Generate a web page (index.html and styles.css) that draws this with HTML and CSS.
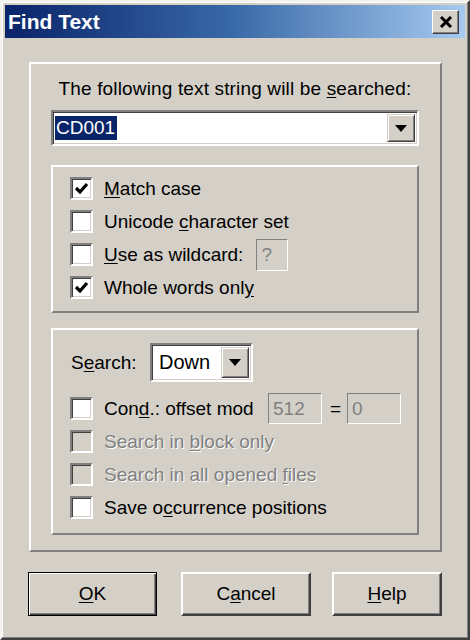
FILE: index.html
```html
<!DOCTYPE html>
<html lang="en">
<head>
<meta charset="UTF-8">
<title>Find Text</title>
<link rel="stylesheet" href="styles.css">
</head>
<body>
<div class="window">
    <div class="titlebar">
        <span class="title">Find Text</span>
        <span class="close">
            <svg width="14" height="12" viewBox="0 0 14 12"><path d="M2 1 L12 11 M12 1 L2 11" stroke="#000" stroke-width="3" fill="none"/></svg>
        </span>
    </div>
    <div class="client">
        <div class="group outer">
            <div class="prompt">The following text string will be <u>s</u>earched:</div>
            <div class="combo wide">
                <span class="value"><span class="sel">CD001</span></span>
                <span class="drop"><svg width="12" height="7" viewBox="0 0 12 7"><polygon points="0,0 12,0 6,7" fill="#000"/></svg></span>
            </div>

            <!-- options -->
            <div class="group options">
                <div class="row"><span class="check on"></span><span class="label"><u>M</u>atch case</span></div>
                <div class="row"><span class="check"></span><span class="label">Unicode <u>c</u>haracter set</span></div>
                <div class="row"><span class="check"></span><span class="label"><u>U</u>se as wildcard:</span><span class="field small">?</span></div>
                <div class="row"><span class="check on"></span><span class="label">Whole words onl<u>y</u></span></div>
            </div>

            <!-- search settings -->
            <div class="group search">
                <div class="searchrow">
                    <span class="label">S<u>e</u>arch:</span>
                    <div class="combo short">
                        <span class="value plain">Down</span>
                        <span class="drop"><svg width="12" height="7" viewBox="0 0 12 7"><polygon points="0,0 12,0 6,7" fill="#000"/></svg></span>
                    </div>
                </div>
                <div class="row"><span class="check"></span><span class="label cond">Con<u>d</u>.: offset mod</span><span class="field num">512</span><span class="eq">=</span><span class="field num">0</span></div>
                <div class="row off"><span class="check"></span><span class="label">Search in <u>b</u>lock only</span></div>
                <div class="row off"><span class="check"></span><span class="label">Search in all opened <u>f</u>iles</span></div>
                <div class="row"><span class="check"></span><span class="label">Save o<u>c</u>currence positions</span></div>
            </div>
        </div>

        <div class="buttons">
            <span class="btn ok"><u>O</u>K</span>
            <span class="btn cancel">C<u>a</u>ncel</span>
            <span class="btn help"><u>H</u>elp</span>
        </div>
    </div>
</div>
</body>
</html>
```

FILE: styles.css
```css
body{
    margin: 0;
    background: #d4d0c8;
    font-family: "Liberation Sans", Arial, sans-serif;
    font-size: 19px;
    color: #000;
}
u{
    text-decoration: underline;
    text-underline-offset: 2px;
}
.window{
    width: 470px;
    height: 640px;
    box-sizing: border-box;
    padding: 3px;
    border: 2px solid;
    border-color: #f4f2ee #404040 #404040 #f4f2ee;
    box-shadow: inset -1px -1px #808080, inset 1px 1px #fff;
    background: #d4d0c8;
    display: flex;
    flex-direction: column;
}
.titlebar{
    height: 33px;
    flex: none;
    background: linear-gradient(to right, #0a246a, #3a6aa8 50%, #a6caf0);
    display: flex;
    align-items: center;
    justify-content: space-between;
    padding: 0 6px 0 3px;
}
.title{
    color: #fff;
    font-weight: bold;
    font-size: 21px;
}
.close{
    width: 27px;
    height: 24px;
    box-sizing: border-box;
    background: #d4d0c8;
    border: 1px solid;
    border-color: #fff #404040 #404040 #fff;
    box-shadow: inset -1px -1px #808080;
    display: flex;
    align-items: center;
    justify-content: center;
    margin-top: 1px;
}
.client{
    padding: 24px 23px 0 24px;
}
.group{
    border: 2px solid;
    border-color: #fff #808080 #808080 #fff;
}
.outer{
    height: 490px;
    box-sizing: border-box;
    padding: 14px 21px 0 20px;
}
.prompt{
    text-align: center;
    line-height: 22px;
    letter-spacing: 0.15px;
    margin-bottom: 10px;
}
.combo{
    display: flex;
    background: #fff;
    box-sizing: border-box;
    border: 2px solid;
    border-color: #808080 #fff #fff #808080;
    box-shadow: inset 1px 1px #404040, inset -1px -1px #d4d0c8;
    padding: 2px;
}
.combo.wide{
    height: 36px;
}
.combo.short{
    width: 103px;
    height: 39px;
}
.value{
    flex: 1;
    display: flex;
    align-items: center;
}
.sel{
    background: #0a246a;
    color: #fff;
    padding: 0 2px 0 1px;
    line-height: 24px;
}
.plain{
    padding-left: 5px;
    font-size: 20px;
}
.drop{
    width: 28px;
    box-sizing: border-box;
    background: #d4d0c8;
    border: 1px solid;
    border-color: #d4d0c8 #404040 #404040 #d4d0c8;
    box-shadow: inset 1px 1px #fff, inset -1px -1px #808080;
    display: flex;
    align-items: center;
    justify-content: center;
}
.options{
    margin-top: 19px;
    height: 148px;
    box-sizing: border-box;
    padding: 5px 0 0 17px;
}
.search{
    margin-top: 15px;
    height: 207px;
    box-sizing: border-box;
    padding: 13px 0 0 17px;
}
.row{
    height: 33px;
    display: flex;
    align-items: center;
}
.check{
    width: 23px;
    height: 23px;
    box-sizing: border-box;
    background: #fff;
    border: 2px solid;
    border-color: #808080 #fff #fff #808080;
    box-shadow: inset 1px 1px #404040, inset -1px -1px #d4d0c8;
    margin-right: 11px;
    flex: none;
}
.check.on{
    background: #fff url("data:image/svg+xml,%3Csvg xmlns='http://www.w3.org/2000/svg' width='15' height='13' viewBox='0 0 15 13'%3E%3Cpolyline points='2,6 6,10 13,2' fill='none' stroke='%23000' stroke-width='3.2'/%3E%3C/svg%3E") no-repeat center;
}
.off .check{
    background: #d4d0c8;
}
.off .label{
    color: #808080;
    text-shadow: 1px 1px #fff;
}
.field{
    height: 32px;
    box-sizing: border-box;
    border: 1px solid;
    border-color: #808080 #fff #fff #808080;
    background: #d4d0c8;
    color: #808080;
    display: flex;
    align-items: center;
    padding-left: 4px;
}
.small{
    width: 32px;
    margin-left: 13px;
}
.num{
    width: 54px;
    height: 31px;
}
.cond{
    width: 164px;
    flex: none;
}
.eq{
    margin: 0 6px 0 8px;
}
.searchrow{
    display: flex;
    align-items: center;
    margin-bottom: 10px;
    padding-left: 1px;
}
.searchrow .label{
    width: 79px;
}
.buttons{
    display: flex;
    margin-top: 20px;
    margin-left: -1px;
}
.btn{
    height: 44px;
    box-sizing: border-box;
    border: 2px solid;
    border-color: #fff #404040 #404040 #fff;
    box-shadow: inset -1px -1px #808080;
    display: flex;
    align-items: center;
    justify-content: center;
}
.ok{
    width: 129px;
    border: 1px solid #000;
    box-shadow: inset 1px 1px #fff, inset -1px -1px #404040, inset -2px -2px #808080;
}
.cancel{
    width: 130px;
    margin-left: 24px;
}
.help{
    width: 110px;
    margin-left: 21px;
}
```
